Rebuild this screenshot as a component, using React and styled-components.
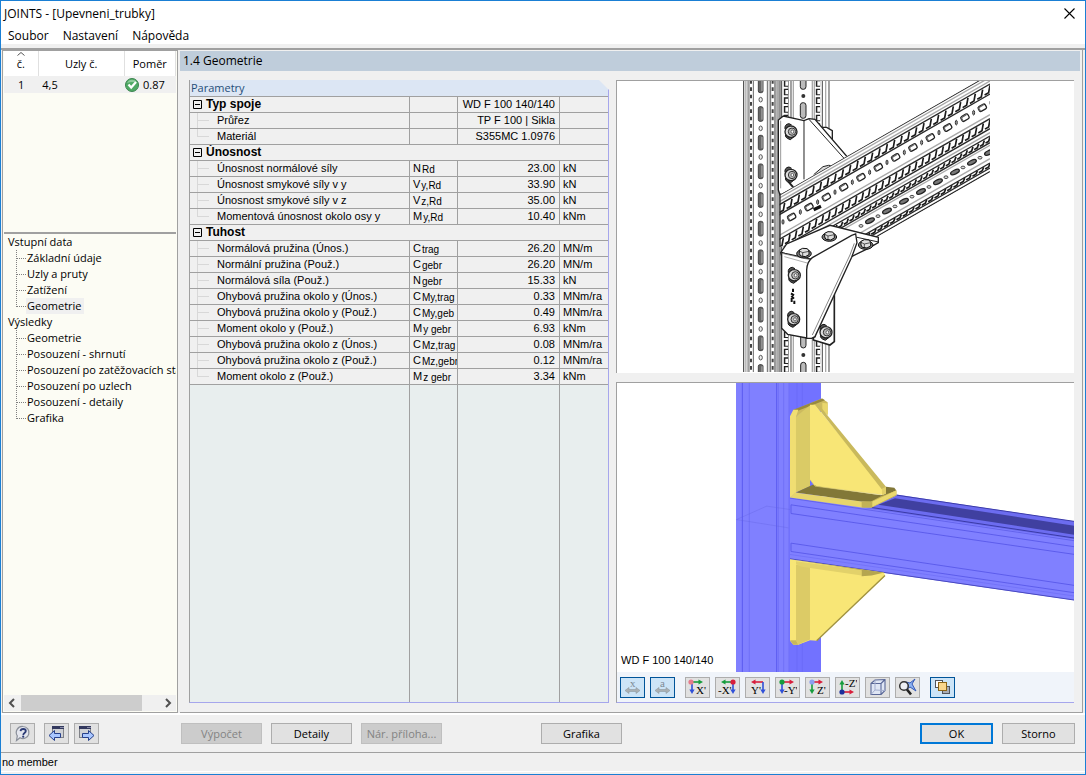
import {useState} from 'react';
import styled, {createGlobalStyle} from 'styled-components';

const params = [
  {group: 'Typ spoje', value: 'WD F 100 140/140', rows: [
    {name: 'Průřez', value: 'TP F 100 | Sikla'},
    {name: 'Materiál', value: 'S355MC 1.0976'},
  ]},
  {group: 'Únosnost', rows: [
    {name: 'Únosnost normálové síly', sym: 'N', sub: 'Rd', value: '23.00', unit: 'kN'},
    {name: 'Únosnost smykové síly v y', sym: 'V', sub: 'y,Rd', value: '33.90', unit: 'kN'},
    {name: 'Únosnost smykové síly v z', sym: 'V', sub: 'z,Rd', value: '35.00', unit: 'kN'},
    {name: 'Momentová únosnost okolo osy y', sym: 'M', sub: 'y,Rd', value: '10.40', unit: 'kNm'},
  ]},
  {group: 'Tuhost', rows: [
    {name: 'Normálová pružina (Únos.)', sym: 'C', sub: 'trag', value: '26.20', unit: 'MN/m'},
    {name: 'Normální pružina (Použ.)', sym: 'C', sub: 'gebr', value: '26.20', unit: 'MN/m'},
    {name: 'Normálová síla (Použ.)', sym: 'N', sub: 'gebr', value: '15.33', unit: 'kN'},
    {name: 'Ohybová pružina okolo y (Únos.)', sym: 'C', sub: 'My,trag', value: '0.33', unit: 'MNm/ra'},
    {name: 'Ohybová pružina okolo y (Použ.)', sym: 'C', sub: 'My,geb', value: '0.49', unit: 'MNm/ra'},
    {name: 'Moment okolo y (Použ.)', sym: 'M', sub: 'y gebr', value: '6.93', unit: 'kNm'},
    {name: 'Ohybová pružina okolo z (Únos.)', sym: 'C', sub: 'Mz,trag', value: '0.08', unit: 'MNm/ra'},
    {name: 'Ohybová pružina okolo z (Použ.)', sym: 'C', sub: 'Mz,gebr', value: '0.12', unit: 'MNm/ra'},
    {name: 'Moment okolo z (Použ.)', sym: 'M', sub: 'z gebr', value: '3.34', unit: 'kNm'},
  ]},
];

const tree = [
  {title: 'Vstupní data', items: ['Základní údaje', 'Uzly a pruty', 'Zatížení', 'Geometrie']},
  {title: 'Výsledky', items: ['Geometrie', 'Posouzení - shrnutí', 'Posouzení po zatěžovacích stavech', 'Posouzení po uzlech', 'Posouzení - detaily', 'Grafika']},
];

const range = (n) => Array.from({length: n}, (_, i) => i);

export default function App() {
  const [selected, setSelected] = useState('0-3');

  return (
    <>
      <GlobalStyle />
      <Window>
        <TitleBar>
          <Title>JOINTS - [Upevneni_trubky]</Title>
          <CloseButton aria-label="Zavřít">
            <svg width="11" height="11" viewBox="0 0 11 11">
              <path d="M.5 .5L10.5 10.5M10.5 .5L.5 10.5" stroke="#000" strokeWidth="1.1" />
            </svg>
          </CloseButton>
        </TitleBar>
        <MenuBar>
          <MenuButton>Soubor</MenuButton>
          <MenuButton>Nastavení</MenuButton>
          <MenuButton>Nápověda</MenuButton>
        </MenuBar>

        <Main>
          <Sidebar>
            <ResultBox>
              <ResultTable>
                <colgroup>
                  <col style={{width: '20%'}} />
                  <col style={{width: '50%'}} />
                  <col style={{width: '30%'}} />
                </colgroup>
                <thead>
                  <tr>
                    <th>
                      <SortMark width="8" height="4" viewBox="0 0 8 4">
                        <path d="M.5 3.5L4 .5L7.5 3.5" fill="none" stroke="#555" />
                      </SortMark>
                      č.
                    </th>
                    <th>Uzly č.</th>
                    <th>Poměr</th>
                  </tr>
                </thead>
                <tbody>
                  <tr>
                    <td>1</td>
                    <td>4,5</td>
                    <td><Ratio><CheckIcon />0.87</Ratio></td>
                  </tr>
                </tbody>
              </ResultTable>
            </ResultBox>
            <Tree>
              {tree.map((section, s) => (
                <li key={section.title}>
                  <TreeTitle>{section.title}</TreeTitle>
                  <TreeList>
                    {section.items.map((item, i) => (
                      <TreeItem key={item}>
                        <TreeLink
                          href="#"
                          $active={selected === `${s}-${i}`}
                          onClick={() => setSelected(`${s}-${i}`)}>
                          {item}
                        </TreeLink>
                      </TreeItem>
                    ))}
                  </TreeList>
                </li>
              ))}
            </Tree>
            <ScrollBar>
              <ScrollArrow d="M6 1L2 5L6 9" />
              <ScrollTrack><ScrollThumb /></ScrollTrack>
              <ScrollArrow d="M2 1L6 5L2 9" />
            </ScrollBar>
          </Sidebar>

          <Content>
            <ContentTitle>1.4 Geometrie</ContentTitle>
            <Panels>
              <ParamPanel>
                <ParamCaption>Parametry</ParamCaption>
                <ParamTable aria-label="Parametry">
                  <colgroup>
                    <col />
                    <col style={{width: 48}} />
                    <col style={{width: 102}} />
                    <col style={{width: 48}} />
                  </colgroup>
                  <tbody>
                    {params.map((section) => (
                      <ParamGroup key={section.group} section={section} />
                    ))}
                  </tbody>
                </ParamTable>
                <ParamFiller><i /><i /><i /><i /></ParamFiller>
              </ParamPanel>

              <Views>
                <View><JointDrawing /></View>
                <View $tinted>
                  <Canvas>
                    <JointModel />
                    <CanvasLabel>WD F 100 140/140</CanvasLabel>
                  </Canvas>
                  <Toolbar />
                </View>
              </Views>
            </Panels>
          </Content>
        </Main>

        <Footer>
          <FooterIcons>
            <ToolButton aria-label="Nápověda"><HelpIcon /></ToolButton>
            <ToolButton $spaced aria-label="Předchozí"><PageIcon /></ToolButton>
            <ToolButton aria-label="Další"><PageIcon $next /></ToolButton>
          </FooterIcons>
          <FooterButtons>
            <Button disabled>Výpočet</Button>
            <Button>Detaily</Button>
            <Button disabled>Nár. příloha...</Button>
            <Button $apart>Grafika</Button>
          </FooterButtons>
          <FooterButtons>
            <Button $small $primary>OK</Button>
            <Button $small>Storno</Button>
          </FooterButtons>
        </Footer>
        <StatusBar>no member</StatusBar>
      </Window>
    </>
  );
}

function ParamGroup({section}) {
  return (
    <>
      <tr>
        <ParamCell as="th" $group colSpan={section.value ? 1 : 4}>
          <Collapse width="9" height="9" viewBox="0 0 9 9">
            <path d="M.5 .5h8v8h-8zM2 4.5h5" fill="none" stroke="#000" />
          </Collapse>
          {section.group}
        </ParamCell>
        {section.value && (
          <>
            <ParamCell />
            <ParamCell $right>{section.value}</ParamCell>
            <ParamCell />
          </>
        )}
      </tr>
      {section.rows.map((row, i) => (
        <tr key={row.name}>
          <ParamCell $name $last={i === section.rows.length - 1}>{row.name}</ParamCell>
          <ParamCell>{row.sym}{row.sub && <Sub>{row.sub}</Sub>}</ParamCell>
          <ParamCell $right>{row.value}</ParamCell>
          <ParamCell>{row.unit}</ParamCell>
        </tr>
      ))}
    </>
  );
}

function ScrollArrow({d}) {
  return (
    <svg width="8" height="10" viewBox="0 0 8 10">
      <path d={d} fill="none" stroke="#505050" strokeWidth="2" />
    </svg>
  );
}

function CheckIcon() {
  return (
    <svg width="14" height="14" viewBox="0 0 14 14">
      <circle cx="7" cy="7" r="6.5" fill="#4fa964" stroke="#3d8551" />
      <path d="M2 5a5.4 5.4 0 0 1 10 0q-5-2-10 0z" fill="#8fcb9b" />
      <path d="M3.5 6.5L6.2 9.5L11 4" fill="none" stroke="#fff" strokeWidth="2.2" />
    </svg>
  );
}

function HelpIcon() {
  return (
    <svg width="17" height="17" viewBox="0 0 17 17">
      <path d="M9 1.5a6 6 0 1 1-3 11.2L2.5 15.5L3.3 10.8A6 6 0 0 1 9 1.5z" fill="#e4e6ee" stroke="#8a8f9a" strokeWidth="1.2" />
      <path d="M6.5 6.2q.3-2.2 2.700-2.200q2.600 0 2.600 2q0 1-1.300 1.900q-1.200.8-1.200 2" fill="none" stroke="#2c3b76" strokeWidth="1.8" />
      <circle cx="9.2" cy="11.7" r="1.1" fill="#2c3b76" />
    </svg>
  );
}

function PageIcon({$next}) {
  return (
    <svg width="17" height="17" viewBox="0 0 17 17">
      <rect x={$next ? 1.5 : 4.5} y="1.5" width="11" height="11" fill="#cfd1d6" stroke="#808288" />
      <rect x={$next ? 1 : 4} y="1" width="12" height="3" fill="#33395e" />
      <path d={$next ? 'M9.5 2.5h3' : 'M12.5 2.5h3'} stroke="#dde" strokeDasharray="1 1" />
      <path
        d={$next ? 'M4.5 8.5h6v-3l5.500 5l-5.500 5v-3h-6z' : 'M12.5 8.500h-6v-3l-5.500 5l5.500 5v-3h6z'}
        fill="#a9c6ff"
        stroke="#27408b"
      />
    </svg>
  );
}

const green = '#169c3c';
const red = '#d81e3c';
const blue = '#2f50d8';

// axis arrow, drawn from (x, y) towards dir
function Arrow({x, y, dir, color}) {
  const turn = {right: 0, down: 90, left: 180, up: 270}[dir];
  return (
    <g transform={`translate(${x} ${y}) rotate(${turn})`}>
      <path d="M0 0H8" stroke={color} strokeWidth="1.6" />
      <path d="M7.5-2.600L12 0L7.500 2.600z" fill={color} />
    </g>
  );
}

function AxisIcon({arrows, dot, label, x, y = 16}) {
  return (
    <svg width="19" height="18" viewBox="0 0 19 18">
      {arrows.map((a) => <Arrow key={a.dir} {...a} />)}
      {dot && <circle cx={dot.x} cy={dot.y} r="2.6" fill={dot.color} />}
      <AxisText x={x} y={y}>{label}</AxisText>
    </svg>
  );
}

function SpanIcon({label}) {
  return (
    <svg width="17" height="18" viewBox="0 0 17 18">
      <AxisText x="6" y="9" $faded>{label}</AxisText>
      <path d="M1 12.500L5 9.500V11.500H12V9.500L16 12.500L12 15.500V13.500H5V15.500z" fill="#aab0b3" stroke="#8f999f" strokeWidth=".6" />
    </svg>
  );
}

function Toolbar() {
  return (
    <ToolbarRow>
      <ToolButton $on aria-label="Osa x"><SpanIcon label="x" /></ToolButton>
      <ToolButton $on aria-label="Rozměr a"><SpanIcon label="a" /></ToolButton>
      <ToolButton $gap aria-label="Pohled X">
        <AxisIcon label="X'" x="8" arrows={[{x: 3, y: 4, dir: 'right', color: green}, {x: 4, y: 4, dir: 'down', color: blue}]} dot={{x: 3, y: 4, color: '#e57b8c'}} />
      </ToolButton>
      <ToolButton aria-label="Pohled -X">
        <AxisIcon label="-X'" x="0" arrows={[{x: 15, y: 4, dir: 'left', color: green}, {x: 15, y: 4, dir: 'down', color: blue}]} dot={{x: 15, y: 4, color: red}} />
      </ToolButton>
      <ToolButton aria-label="Pohled Y">
        <AxisIcon label="Y'" x="3" arrows={[{x: 15, y: 4, dir: 'left', color: red}, {x: 15, y: 4, dir: 'down', color: blue}]} />
      </ToolButton>
      <ToolButton aria-label="Pohled -Y">
        <AxisIcon label="-Y'" x="6" arrows={[{x: 4, y: 4, dir: 'right', color: red}, {x: 4, y: 4, dir: 'down', color: blue}]} dot={{x: 4, y: 4, color: green}} />
      </ToolButton>
      <ToolButton aria-label="Pohled Z">
        <AxisIcon label="Z'" x="9" arrows={[{x: 3, y: 4, dir: 'right', color: red}, {x: 4, y: 4, dir: 'down', color: green}]} dot={{x: 4, y: 4, color: '#8c9ff0'}} />
      </ToolButton>
      <ToolButton aria-label="Pohled -Z">
        <AxisIcon label="-Z'" x="7" y="9" arrows={[{x: 4, y: 14, dir: 'right', color: red}, {x: 4, y: 14, dir: 'up', color: green}]} dot={{x: 4, y: 14, color: '#1b2f9c'}} />
      </ToolButton>
      <ToolButton aria-label="Izometrie">
        <svg width="18" height="18" viewBox="0 0 18 18">
          <path d="M6 2.500L16 1.500V13L12 16.500H2V5.500L6 2.500z" fill="#dfe6f5" />
          <path d="M2 5.500H12V16.500H2zL6 2L16 1.500V12.500L12 16.500M12 5.500L16 1.500" fill="none" stroke="#5a6898" strokeWidth="1.1" />
          <path d="M6 2V12L16 12.500M6 12L2 16.500" fill="none" stroke="#a3aecf" />
        </svg>
      </ToolButton>
      <ToolButton aria-label="Celý pohled">
        <svg width="19" height="18" viewBox="0 0 19 18">
          <path d="M8 4L12 5L17 1L14 6L18 13L12 9L8 12L10 7z" fill="#8fb4f2" stroke="#3358b8" />
          <circle cx="6" cy="8" r="4.3" fill="#f0f2f7" fillOpacity=".8" stroke="#333" strokeWidth="1.5" />
          <path d="M9 11.500L13 16.500" stroke="#222" strokeWidth="2.6" />
        </svg>
      </ToolButton>
      <ToolButton $on $gap aria-label="Průhlednost">
        <svg width="17" height="16" viewBox="0 0 17 16">
          <rect x="8.5" y="7.5" width="7" height="7" fill="#a9adb5" stroke="#50545c" />
          <rect x="1.5" y="1.5" width="7" height="7" fill="#fff" stroke="#50545c" />
          <rect x="4.5" y="3.5" width="8" height="8" fill="#f9d68c" stroke="#8c6414" />
        </svg>
      </ToolButton>
    </ToolbarRow>
  );
}

function Bolt({x, y}) {
  return (
    <g transform={`translate(${x} ${y})`}>
      <path d="M-18-8Q-20-22-6-24L2-20M-16 8Q-20 18-2 24L8 16" fill="#555" stroke="#111" strokeWidth="3" />
      <ellipse rx="18" ry="17" fill="#ddd" stroke="#222" strokeWidth="4" />
      <ellipse cx="3" rx="11" ry="11" fill="#bbb" stroke="#333" strokeWidth="3" />
      <ellipse cx="4" rx="4" ry="5" fill="#fff" stroke="#333" strokeWidth="2" />
    </g>
  );
}

function Nut({x, y}) {
  return (
    <g transform={`translate(${x} ${y})`} stroke="#111" strokeWidth="3">
      <ellipse cy="3" rx="22" ry="13" fill="#777" />
      <path d="M-14-8L-4-13L10-12L15-5V6L4 12L-10 10L-14 3z" fill="#ddd" />
      <path d="M-14-5L-4 0L15-4M-4 0V11" fill="none" strokeWidth="2" />
    </g>
  );
}

// rail running to the upper right; y0 is the height at the cut x = 765
const beamY = (y0, x) => y0 + 0.573 * (765 - x);
const beamLine = (y0) => `M130 ${beamY(y0, 130)}L765 ${y0}`;

// row of slanted openings along the rail
function Ladder({y0, half, step}) {
  return range(Math.ceil(640 / step)).map((i) => {
    const x = 765 - i * step;
    const y = beamY(y0, x);
    return (
      <path
        key={i}
        d={`M${x} ${y - half}L${x - 4} ${y + half}l-${step * 0.55} ${step * 0.32}`}
        fill="none"
        stroke="#1c1c1c"
        strokeWidth="5"
      />
    );
  });
}

function Slots({x, height, phase}) {
  return range(Math.ceil(height / 86) + 1).map((i) => (
    <g key={i}>
      <rect x={x - 7} y={phase + i * 86 - 22} width="14" height="44" rx="5" fill="#666" stroke="#444" strokeWidth="3" />
      <path d={`M${x + 4} ${phase + i * 86 - 17}v34`} stroke="#bbb" strokeWidth="3" />
      <ellipse cx={x} cy={phase + i * 86 + 43} rx="5" ry="7" fill="#eee" stroke="#555" strokeWidth="3" />
    </g>
  ));
}

function JointDrawing() {
  return (
    <Drawing viewBox="617 81 457 292" preserveAspectRatio="xMidYMid slice">
      <clipPath id="sheet"><rect x="0" y="3" width="766" height="873" /></clipPath>
      <clipPath id="beam"><path d="M133 345L765 -18V277L400 486L133 500z" /></clipPath>
      <g transform="translate(735 80) scale(.3333)">
        <g clipPath="url(#sheet)">
          {/* rear rail */}
          <path d="M140 0H282V880H140z" fill="#fff" />
          <path d="M140 0V880M168 0V880M262 0V880M282 0V880" stroke="#444" strokeWidth="3" />
          <path d="M160 0V880M175 0V880M232 0V880M238 0V880M272 0V880" stroke="#aaa" strokeWidth="4" />
          <path d="M153 0V880M249 0V880" stroke="#222" strokeWidth="13" strokeDasharray="20 6" />
          <path d="M155 4V880M251 4V880" stroke="#fff" strokeWidth="8" strokeDasharray="13 13" />
          <rect x="196" y="-20" width="17" height="48" rx="8" fill="#bbb" stroke="#222" strokeWidth="3" />
          <circle cx="205" cy="48" r="6" fill="#333" />
          <rect x="196" y="68" width="17" height="47" rx="8" fill="#bbb" stroke="#222" strokeWidth="3" />
          <rect x="197" y="758" width="16" height="46" rx="8" fill="#bbb" stroke="#222" strokeWidth="3" />
          <circle cx="205" cy="825" r="6" fill="#333" />
          <rect x="197" y="847" width="16" height="46" rx="8" fill="#bbb" stroke="#222" strokeWidth="3" />
          {/* upright rail */}
          <path d="M25 0H135V880H25z" fill="#fff" />
          <path d="M32 0V880M38 0V880M103 0V880" stroke="#bbb" strokeWidth="5" />
          <path d="M128 0V880" stroke="#aaa" strokeWidth="9" />
          <path d="M26 0V880M120 0V880M135 0V880" stroke="#333" strokeWidth="3" />
          <path d="M42 0V880M55 0V880M97 0V880M107 0V880" stroke="#666" strokeWidth="3" />
          <path d="M48 0V880M113 0V880" stroke="#444" strokeWidth="6" strokeDasharray="11 11" />
          <Slots x={77} height={880} phase={16} />

          {/* upper bracket */}
          <path d="M255 142H275L292 152V200L240 150z" fill="#fff" stroke="#222" strokeWidth="4" />
          <path d="M130 330V120L145 108L207 122L222 116L240 118L345 240L135 345z" fill="#fff" stroke="#222" strokeWidth="4" />
          <path d="M207 122V298M222 118L328 236" fill="none" stroke="#222" strokeWidth="3" />
          <path d="M137 122V325" stroke="#999" strokeWidth="3" />
          <path d="M236 284L264 260Q280 253 300 258L260 280" fill="#ddd" stroke="#222" strokeWidth="3" />
          <Bolt x={168} y={155} />
          <Bolt x={168} y={285} />
          <path d="M160 305L175 322" stroke="#222" strokeWidth="6" />

          {/* cross rail */}
          <g clipPath="url(#beam)">
            <path d="M0 0H766V880H0z" fill="#fff" />
            <path d={beamLine(-8) + beamLine(3) + beamLine(104) + beamLine(158) + beamLine(196) + beamLine(236)} stroke="#aaa" strokeWidth="4" />
            <path d={beamLine(-17) + beamLine(12) + beamLine(42) + beamLine(116) + beamLine(146) + beamLine(168) + beamLine(188) + beamLine(249) + beamLine(264) + beamLine(275)} stroke="#2a2a2a" strokeWidth="4" />
            <Ladder y0={27} half={11} step={22} />
            <Ladder y0={130} half={11} step={20} />
            <Ladder y0={178} half={6} step={17} />
            <Ladder y0={256} half={5} step={19} />
            {range(13).map((i) => {
              const x = 170 + i * 52;
              return (
                <g key={i}>
                  <g transform={`translate(${x} ${beamY(70, x)}) rotate(-30)`}>
                    <rect x="-12" y="-8" width="24" height="16" rx="5" fill="#fff" stroke="#222" strokeWidth="4" />
                    <path d="M-10 6V-4Q-9-6 8-6" fill="none" stroke="#666" strokeWidth="4" />
                  </g>
                  <ellipse cx={x - 26} cy={beamY(70, x - 26)} rx="3" ry="7" fill="#aaa" stroke="#333" strokeWidth="3" />
                </g>
              );
            })}
            {range(8).map((i) => {
              const x = 405 + i * 51;
              return (
                <g key={i}>
                  <ellipse cx={x} cy={beamY(216, x)} rx="14" ry="6" transform={`rotate(-25 ${x} ${beamY(216, x)})`} fill="#777" stroke="#222" strokeWidth="4" />
                  <ellipse cx={x - 27} cy={beamY(216, x - 27)} rx="6" ry="4" fill="#ddd" stroke="#444" strokeWidth="3" />
                </g>
              );
            })}
            <path d="M236 389L258 379" stroke="#111" strokeWidth="10" />
          </g>
          <path d="M135 340V500" stroke="#222" strokeWidth="4" />

          {/* lower bracket */}
          <path d="M298 645V785L285 795L235 780L240 650z" fill="#fff" stroke="#222" strokeWidth="5" />
          <path d="M137 518L155 492L285 436L430 472V488L400 505L345 532L230 560L140 528z" fill="#fff" stroke="#222" strokeWidth="4" />
          <path d="M140 517V745L158 763L215 774L240 770V540L150 520z" fill="#fff" stroke="#222" strokeWidth="4" />
          <path d="M140 520L228 540M148 530L220 550" stroke="#888" strokeWidth="2" />
          <path d="M215 775V570Q216 545 232 533L350 466L362 462L366 488L350 532L240 770L230 775z" fill="#fff" stroke="#222" strokeWidth="4" />
          <path d="M358 490L345 525L232 765" fill="none" stroke="#888" strokeWidth="3" />
          <path d="M366 472L430 486" stroke="#222" strokeWidth="3" />
          <Nut x={207} y={518} />
          <Nut x={283} y={468} />
          <Nut x={392} y={492} />
          <Bolt x={178} y={586} />
          <Bolt x={176} y={718} />
          <Bolt x={273} y={757} />
          <path d="M174 626v10m-6 4l9 6m-8 2l8 8m-7-2v12m8-4v10" stroke="#111" strokeWidth="6" />
        </g>
      </g>
    </Drawing>
  );
}

function JointModel() {
  return (
    <Drawing viewBox="617 383 457 290" preserveAspectRatio="xMidYMid slice">
      <g transform="translate(735 380) scale(.3333)">
        {/* column */}
        <path d="M3 0H165V880H3z" fill="#8080ff" />
        <path d="M163 0H258V880H163z" fill="#7272ff" />
        <path d="M22 0V880M125 0V880" stroke="#5a5af0" strokeWidth="3" />
        <path d="M43 0V880M130 0V880M146 0V880M162 0V880M186 0V880M202 0V880" stroke="#6868f4" strokeWidth="2" />
        <path d="M3 420L160 445M5 420L95 380L165 390M165 442L258 416" fill="none" stroke="#6262e0" strokeWidth="1" />

        {/* beam */}
        <path d="M165 354L485 345L1020 426V663L165 539z" fill="#8080ff" />
        <path d="M440 368L485 348L1020 427V480L380 384z" fill="#6c6cf0" />
        <path d="M430 376L480 356L1020 439V466L500 386z" fill="#4040a0" />
        <path d="M485 347L1020 426M410 384L1020 476" stroke="#3a3aa6" strokeWidth="3" fill="none" />
        <path d="M165 356L1020 484" stroke="#5656e4" strokeWidth="2" />
        <path d="M1020 502L168 376V402L1020 525M1020 618L168 491V516L1020 640" fill="none" stroke="#5c5cec" strokeWidth="3" />
        <path d="M165 525L1020 650" stroke="#6c6cf6" strokeWidth="2" />
        <path d="M165 538L1020 662" stroke="#4848c0" strokeWidth="3" />

        {/* upper bracket */}
        <path d="M175 92L260 57L278 68V105L230 80L182 112z" fill="#cdbb5e" />
        <path d="M175 91L262 57L270 62L183 96z" fill="#988a3e" />
        <path d="M165 110L175 91L190 91L183 112V340L165 354z" fill="#f0de72" />
        <path d="M183 111L225 78V320L183 339z" fill="#dacb66" />
        <path d="M225 76H240L445 328V346L240 320L225 300z" fill="#f8e676" />
        <path d="M262 70L278 72V108L262 90z" fill="#e9d76c" />
        <path d="M240 74L250 74L453 322V343H441V330z" fill="#c9b95c" />
        <path d="M183 339L235 315L245 320L438 347L453 343V322L478 325L484 333L410 368L380 367z" fill="#827838" />
        <path d="M441 328L453 322V342L441 347z" fill="#e2d068" />
        <path d="M165 354L180 339L380 366L408 367L484 333V348L410 384L380 384z" fill="#e6d56c" />
        <path d="M380 366H408L438 350L484 333V348L410 384H380z" fill="#c2b256" />
        <path d="M412 366L484 333V346L412 382z" fill="#ead970" />
        <path d="M225 300L240 320L440 346" fill="none" stroke="#e0cf68" strokeWidth="2" />

        {/* lower bracket */}
        <path d="M165 539L448 580L450 590L245 784L225 782L190 796H175L165 784z" fill="#f8e676" />
        <path d="M183 556L225 562V780L190 795L183 782z" fill="#dccb66" />
        <path d="M183 545L380 572V588L200 562L183 554z" fill="#e2d16a" />
        <path d="M165 539L448 579L410 588L380 590L380 572z" fill="#b5a650" />
        <path d="M165 782H183L190 796H175z" fill="#c8b85a" />
        <path d="M450 588L245 784" stroke="#a09242" strokeWidth="4" />
      </g>
    </Drawing>
  );
}

const GlobalStyle = createGlobalStyle`
  * {
    box-sizing: border-box;
  }
  body {
    margin: 0;
    background: #f0f0f0;
    color: #000;
    font-family: 'Open Sans', sans-serif;
    font-size: 11px;
  }
  button {
    font: inherit;
    color: inherit;
    padding: 0;
  }
`;

const Window = styled.div`
  height: 100vh;
  display: flex;
  flex-direction: column;
  background: #f0f0f0;
  border: 1px solid #1a7fd4;
`;

const TitleBar = styled.header`
  height: 25px;
  padding: 0 10px 0 3px;
  display: flex;
  align-items: center;
  justify-content: space-between;
  background: #fff;
`;

const Title = styled.h1`
  margin: 0;
  font-size: 12px;
  font-weight: 400;
`;

const CloseButton = styled.button`
  display: flex;
  background: none;
  border: none;
`;

const MenuBar = styled.nav`
  height: 18px;
  padding-left: 7px;
  display: flex;
  align-items: center;
  gap: 14px;
  background: #fff;
  font-size: 12px;
`;

const MenuButton = styled.button`
  background: none;
  border: none;
`;

const Main = styled.main`
  flex: 1;
  min-height: 0;
  margin-top: 4px;
  display: grid;
  grid-template-columns: 177px 1fr;
  gap: 2px;
  border-top: 2px solid #a0a0a0;
  border-bottom: 2px solid #fff;
`;

const Sidebar = styled.aside`
  min-height: 0;
  margin-left: 1px;
  display: flex;
  flex-direction: column;
  overflow: hidden;
  background: #fcfcf4;
  border: 1px solid #a0a0a0;
  padding: 0 1px 1px;
`;

const ResultBox = styled.div`
  height: 183px;
  border-bottom: 2px solid #a0a0a0;
`;

const ResultTable = styled.table`
  width: 100%;
  table-layout: fixed;
  border-collapse: collapse;

  th {
    position: relative;
    height: 25px;
    padding: 0;
    background: #fff;
    border-right: 1px solid #e0e0e0;
    font-weight: 400;
  }
  td {
    height: 17px;
    padding: 0 4px;
    background: #f0f0f0;
  }
  td:first-child {
    text-align: center;
  }
  td:last-child {
    padding: 0 1px;
  }
`;

const SortMark = styled.svg`
  position: absolute;
  top: 1px;
  left: 50%;
  margin-left: -4px;
`;

const Ratio = styled.span`
  display: flex;
  align-items: center;
  gap: 4px;
`;

const Tree = styled.ul`
  flex: 1;
  min-height: 0;
  margin: 0;
  padding: 0 0 0 4px;
  list-style: none;
  white-space: nowrap;
  overflow: hidden;
`;

const TreeTitle = styled.div`
  line-height: 16px;
`;

const TreeList = styled.ul`
  margin: 0;
  padding: 0 0 0 8px;
  list-style: none;
`;

const TreeItem = styled.li`
  height: 16px;
  display: flex;

  &::before {
    content: '';
    flex: none;
    width: 9px;
    height: 8px;
    border-left: 1px dotted #808080;
    border-bottom: 1px dotted #808080;
  }
  &:not(:last-child) {
    background: repeating-linear-gradient(#808080 0 1px, transparent 1px 2px) left / 1px 100% no-repeat;
  }
`;

const TreeLink = styled.a`
  padding: 0 2px 0 1px;
  line-height: 16px;
  color: #000;
  text-decoration: none;
  background: ${({$active}) => ($active ? '#f0f0f0' : 'none')};
`;

const ScrollBar = styled.div`
  height: 16px;
  padding: 0 4px;
  display: flex;
  align-items: center;
  gap: 5px;
  background: #f0f0f0;
`;

const ScrollTrack = styled.div`
  flex: 1;
  height: 100%;
`;

const ScrollThumb = styled.div`
  width: 88%;
  height: 100%;
  background: #cdcdcd;
`;

const Content = styled.section`
  min-width: 0;
  min-height: 0;
  margin-right: 2px;
  padding-top: 1px;
  display: flex;
  flex-direction: column;
  border-right: 1px solid #a0a0a0;
  border-bottom: 1px solid #a0a0a0;
`;

const ContentTitle = styled.h2`
  margin: 0 2px 0 0;
  height: 20px;
  padding-left: 3px;
  background: #bfcddb;
  font-size: 12px;
  font-weight: 400;
  line-height: 20px;
`;

const Panels = styled.div`
  flex: 1;
  min-height: 0;
  padding: 9px 8px 9px 9px;
  display: grid;
  grid-template-columns: 420px 1fr;
  gap: 7px;
`;

const ParamPanel = styled.div`
  min-height: 0;
  display: flex;
  flex-direction: column;
  border: 1px solid #a6a6ec;
  border-top: none;
  border-left-color: #a0a0a0;
  clip-path: polygon(0 0, calc(100% - 10px) 0, 100% 10px, 100% 100%, 0 100%);
  font-family: 'Liberation Sans', Arial, sans-serif;
  font-size: 11px;
`;

const ParamCaption = styled.div`
  height: 17px;
  padding-left: 1px;
  line-height: 16px;
  color: #1f4e79;
  background: #dce6f4;
  border-bottom: 1px solid #a0a0a0;
  font-family: 'Open Sans', sans-serif;
`;

const ParamTable = styled.table`
  width: 100%;
  table-layout: fixed;
  border-collapse: separate;
  border-spacing: 0;
`;

const ParamCell = styled.td`
  height: 16px;
  padding: 0 4px 0 3px;
  line-height: 15px;
  white-space: nowrap;
  overflow: hidden;
  text-align: ${({$right}) => ($right ? 'right' : 'left')};
  border-right: 1px solid #a0a0a0;
  border-bottom: 1px solid #a0a0a0;

  &:last-child {
    border-right: none;
  }
  ${({$group}) =>
    $group &&
    `
  font-size: 12px;
  font-weight: 700;`}
  ${({$name, $last}) =>
    $name &&
    `
  padding-left: 27px;
  background:
    linear-gradient(#d8d8d8, #d8d8d8) 7px 7px / 12px 1px no-repeat,
    linear-gradient(#d8d8d8, #d8d8d8) 7px 0 / 1px ${$last ? '8px' : '100%'} no-repeat;`}
`;

const Collapse = styled.svg`
  margin-right: 4px;
  vertical-align: -1px;
`;

const Sub = styled.span`
  margin-left: 1px;
  font-size: 10px;
  position: relative;
  top: 1px;
`;

const ParamFiller = styled.div`
  flex: 1;
  display: grid;
  grid-template-columns: 1fr 48px 102px 48px;
  background: #e8eeee;

  i:not(:last-child) {
    border-right: 1px solid #a0a0a0;
  }
`;

const Views = styled.div`
  min-height: 0;
  display: grid;
  grid-template-rows: 293fr 321fr;
  gap: 9px;
`;

const View = styled.div`
  min-height: 0;
  display: flex;
  flex-direction: column;
  background: ${({$tinted}) => ($tinted ? '#f0f4fa' : '#fff')};
  border-top: 1px solid #a0a0a0;
  border-left: 1px solid #a0a0a0;
  border-bottom: ${({$tinted}) => ($tinted ? '1px solid #a6a6ec' : 'none')};
`;

const Canvas = styled.div`
  position: relative;
  flex: 1;
  min-height: 0;
  background: #fff;
`;

const CanvasLabel = styled.span`
  position: absolute;
  left: 4px;
  bottom: 6px;
  font-family: 'Liberation Sans', Arial, sans-serif;
  font-size: 11px;
`;

const Drawing = styled.svg`
  display: block;
  width: 100%;
  height: 100%;
`;

const ToolbarRow = styled.div`
  height: 30px;
  padding-left: 3px;
  display: flex;
  align-items: center;
  gap: 5px;
`;

const ToolButton = styled.button`
  width: 25px;
  height: 21px;
  display: flex;
  align-items: center;
  justify-content: center;
  margin-left: ${({$gap, $spaced}) => ($gap ? '5px' : $spaced ? '4px' : '0')};
  background: ${({$on}) => ($on ? '#cce4f7' : '#e1e1e1')};
  border: 1px solid ${({$on}) => ($on ? '#005499' : '#adadad')};
`;

const AxisText = styled.text`
  font-family: 'Liberation Serif', serif;
  font-size: 11px;
  fill: ${({$faded}) => ($faded ? '#7d8a94' : '#000')};
`;

const Footer = styled.footer`
  height: 37px;
  padding: 0 10px 0 9px;
  display: flex;
  align-items: center;
`;

const FooterIcons = styled.div`
  width: 171px;
  display: flex;
  gap: 5px;
`;

const FooterButtons = styled.div`
  display: flex;
  gap: 9px;

  &:last-child {
    margin-left: auto;
  }
`;

const Button = styled.button`
  width: ${({$small}) => ($small ? '73px' : '81px')};
  height: 21px;
  margin-left: ${({$apart}) => ($apart ? '90px' : '0')};
  background: #e1e1e1;
  border: ${({$primary}) => ($primary ? '2px solid #0078d7' : '1px solid #adadad')};

  &:disabled {
    color: #838383;
    background: #ccc;
    border-color: #bfbfbf;
  }
`;

const StatusBar = styled.div`
  height: 20px;
  margin-bottom: 2px;
  padding-left: 1px;
  line-height: 18px;
  border-top: 1px solid #a0a0a0;
  border-bottom: 1px solid #fff;
  font-family: 'Liberation Sans', Arial, sans-serif;
`;
